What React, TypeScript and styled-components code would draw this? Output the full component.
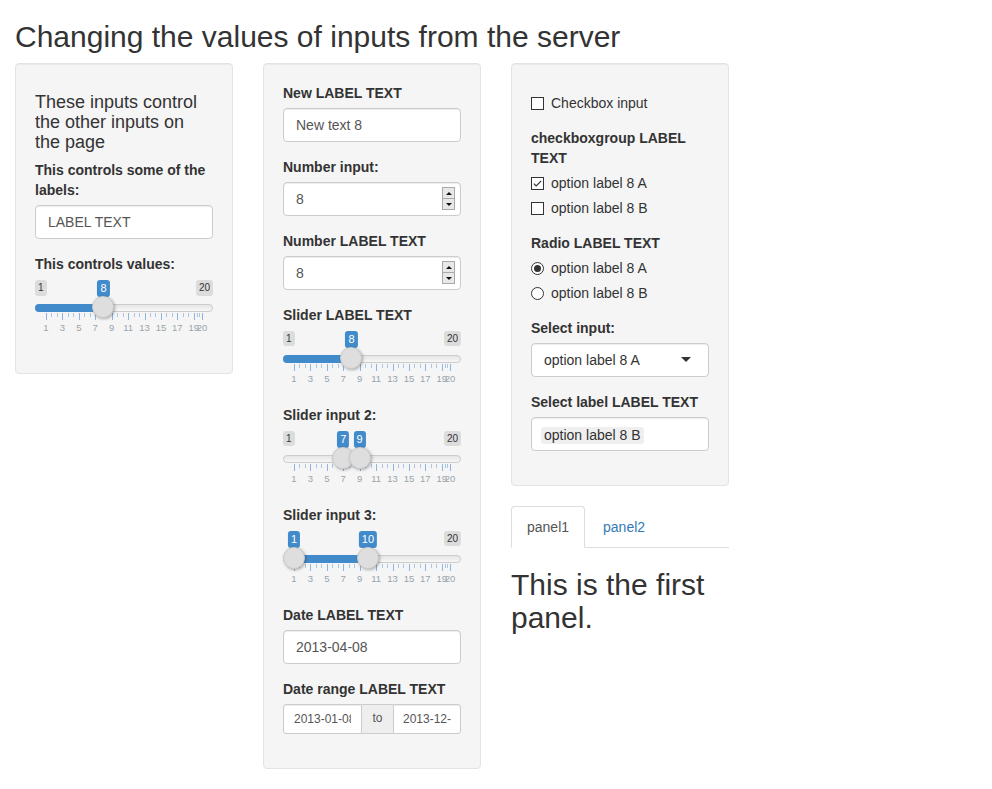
import React from "react";
import styled, { createGlobalStyle } from "styled-components";

const GlobalStyle = createGlobalStyle`
	* {
		box-sizing: border-box;
	}
	html,
	body {
		margin: 0;
		background: #fff;
	}
	body {
		font-family: "Liberation Sans", Arial, sans-serif;
		font-size: 14px;
		line-height: 1.42857143;
		color: #333;
	}
`;

const Page = styled.div`
	padding: 0 15px;
`;

const Title = styled.h2`
	margin: 20px 0 10px;
	font-size: 30px;
	font-weight: 500;
	line-height: 1.1;
`;

const Row = styled.div`
	display: flex;
	align-items: flex-start;
	margin: 0 -15px;
`;

const Column = styled.div`
	flex: 0 0 25%;
	min-width: 0;
	padding: 0 15px;
`;

const Well = styled.div`
	min-height: 20px;
	padding: 19px;
	margin-bottom: 20px;
	background: #f5f5f5;
	border: 1px solid #e3e3e3;
	border-radius: 4px;
	box-shadow: inset 0 1px 1px rgba(0, 0, 0, 0.05);
`;

const Heading = styled.h4`
	margin: 10px 0 8px;
	font-size: 18px;
	font-weight: 500;
	line-height: 1.1;
`;

const FormGroup = styled.div`
	margin-bottom: 15px;
`;

const Label = styled.label`
	display: block;
	margin-bottom: 5px;
	font-weight: 700;
`;

const TextInput = styled.input`
	display: block;
	width: 100%;
	height: 34px;
	padding: 6px 12px;
	font-family: inherit;
	font-size: 14px;
	line-height: 1.42857143;
	color: #555;
	background: #fff;
	border: 1px solid #ccc;
	border-radius: 4px;
	box-shadow: inset 0 1px 1px rgba(0, 0, 0, 0.075);
	outline: none;
`;

/* number input with the native looking spin buttons */
const NumberWrap = styled.div`
	position: relative;
`;

const SpinBox = styled.span`
	position: absolute;
	top: 5px;
	right: 6px;
	width: 13px;
	height: 23px;
	display: flex;
	flex-direction: column;
	border: 1px solid #a9a9a9;
	background: #e8e8e8;
`;

const SpinButton = styled.span<{ $down?: boolean }>`
	flex: 1;
	display: flex;
	align-items: center;
	justify-content: center;
	border-top: ${(p) => (p.$down ? "1px solid #a9a9a9" : "0")};

	&::after {
		content: "";
		width: 0;
		height: 0;
		border-left: 3px solid transparent;
		border-right: 3px solid transparent;
		${(p) => (p.$down ? "border-top: 3px solid #111;" : "border-bottom: 3px solid #111;")}
	}
`;

/* slider (ion.rangeSlider, shiny skin) */
const SliderBox = styled.div`
	position: relative;
	height: 60px;
	font-family: Arial, "Liberation Sans", sans-serif;
`;

const MinMax = styled.span<{ $side: "left" | "right" }>`
	position: absolute;
	top: 1px;
	${(p) => p.$side}: 0;
	padding: 1px 3px;
	font-size: 10px;
	line-height: 1.333;
	color: #333;
	background: rgba(0, 0, 0, 0.1);
	border-radius: 3px;
`;

const ValueTag = styled.span`
	position: absolute;
	top: 1px;
	transform: translateX(-50%);
	padding: 1px 3px;
	font-size: 11px;
	line-height: 1.333;
	color: #fff;
	background: #428bca;
	border-radius: 3px;
	white-space: nowrap;
`;

const Track = styled.div`
	position: absolute;
	top: 25px;
	left: 0;
	right: 0;
	height: 8px;
	border: 1px solid #ccc;
	border-radius: 16px;
	background: linear-gradient(to bottom, #ddd -50%, #fff 150%);
`;

const Bar = styled.div<{ $edge?: boolean }>`
	position: absolute;
	top: 25px;
	height: 8px;
	background: #428bca;
	border-radius: ${(p) => (p.$edge ? "16px 0 0 16px" : "0")};
`;

const Handle = styled.div`
	position: absolute;
	top: 17px;
	width: 22px;
	height: 22px;
	margin-left: -11px;
	background: #dedede;
	border: 1px solid #ccc;
	border-radius: 27px;
	box-shadow: 1px 1px 3px rgba(0, 0, 0, 0.3);
`;

const Tick = styled.span<{ $big?: boolean }>`
	position: absolute;
	top: 34px;
	width: 1px;
	height: ${(p) => (p.$big ? "7px" : "4px")};
	background: ${(p) => (p.$big ? "#8db5dd" : "#a9c6e4")};
`;

const TickText = styled.span`
	position: absolute;
	top: 43px;
	transform: translateX(-50%);
	font-size: 9.5px;
	line-height: 11px;
	color: #99a4ac;
	white-space: nowrap;
`;

type SliderProps = {
	min: number;
	max: number;
	from: number;
	to?: number;
};

const at = (f: number) => `calc(11px + (100% - 22px) * ${f})`;

const Slider: React.FC<SliderProps> = ({ min, max, from, to }) => {
	const frac = (v: number) => (v - min) / (max - min);
	const bigValues: number[] = [];
	for (let v = min; v < max; v += 2) bigValues.push(v);
	bigValues.push(max);
	const smallValues: number[] = [];
	for (let i = 0; i < bigValues.length - 1; i++) {
		const a = bigValues[i];
		const b = bigValues[i + 1];
		smallValues.push(a + (b - a) / 3, a + ((b - a) * 2) / 3);
	}
	const isRange = to !== undefined;
	const hideMin = frac(from) < 0.08;
	const hideMax = frac(to ?? from) > 0.92;

	return (
		<SliderBox>
			<Track />
			{isRange ? (
				<Bar style={{ left: at(frac(from)), width: `calc((100% - 22px) * ${frac(to!) - frac(from)})` }} />
			) : (
				<Bar $edge style={{ left: 0, width: at(frac(from)) }} />
			)}
			{!hideMin && <MinMax $side="left">{min}</MinMax>}
			{!hideMax && <MinMax $side="right">{max}</MinMax>}
			<ValueTag style={{ left: at(frac(from)) }}>{from}</ValueTag>
			{isRange && <ValueTag style={{ left: at(frac(to!)) }}>{to}</ValueTag>}
			{smallValues.map((v) => (
				<Tick key={"s" + v} style={{ left: at(frac(v)) }} />
			))}
			{bigValues.map((v) => (
				<Tick key={"b" + v} $big style={{ left: at(frac(v)) }} />
			))}
			{bigValues.map((v) => (
				<TickText key={"t" + v} style={{ left: at(frac(v)) }}>
					{v}
				</TickText>
			))}
			<Handle style={{ left: at(frac(from)) }} />
			{isRange && <Handle style={{ left: at(frac(to!)) }} />}
		</SliderBox>
	);
};

/* date range */
const DateRange = styled.div`
	display: flex;
	height: 30px;
`;

const DateInput = styled.input<{ $first?: boolean }>`
	flex: ${(p) => (p.$first ? "0 0 79px" : "1 1 0")};
	min-width: 0;
	height: 30px;
	padding: ${(p) => (p.$first ? "5px 10px" : "5px 9px")};
	font-family: inherit;
	font-size: 12px;
	line-height: 1.5;
	color: #555;
	background: #fff;
	border: 1px solid #ccc;
	border-radius: ${(p) => (p.$first ? "3px 0 0 3px" : "0 3px 3px 0")};
	box-shadow: inset 0 1px 1px rgba(0, 0, 0, 0.075);
	outline: none;
`;

const Addon = styled.span`
	flex: 0 0 31px;
	display: flex;
	align-items: center;
	justify-content: center;
	font-size: 12px;
	color: #555;
	background: #eee;
	border-top: 1px solid #ccc;
	border-bottom: 1px solid #ccc;
`;

/* checkboxes and radios */
const CheckRow = styled.div<{ $top?: boolean }>`
	display: flex;
	align-items: flex-start;
	min-height: 20px;
	margin-top: ${(p) => (p.$top ? "10px" : "0")};
`;

const OptionList = styled.div`
	display: flex;
	flex-direction: column;
	gap: 5px;
`;

const Box = styled.span<{ $round?: boolean }>`
	flex: 0 0 13px;
	width: 13px;
	height: 13px;
	margin: 4px 7px 0 0;
	display: flex;
	align-items: center;
	justify-content: center;
	background: #fff;
	border: 1px solid #333;
	border-radius: ${(p) => (p.$round ? "50%" : "0")};
`;

const Dot = styled.span`
	width: 7px;
	height: 7px;
	border-radius: 50%;
	background: #333;
`;

const Check: React.FC<{ checked?: boolean; label: string; top?: boolean }> = ({ checked, label, top }) => (
	<CheckRow $top={top}>
		<Box>
			{checked && (
				<svg width="11" height="11" viewBox="0 0 11 11">
					<polyline points="1.8,5.6 4.2,8 9.2,2.8" fill="none" stroke="#333" strokeWidth="1.2" />
				</svg>
			)}
		</Box>
		<span>{label}</span>
	</CheckRow>
);

const Radio: React.FC<{ checked?: boolean; label: string }> = ({ checked, label }) => (
	<CheckRow>
		<Box $round>{checked && <Dot />}</Box>
		<span>{label}</span>
	</CheckRow>
);

/* selectize */
const SelectBox = styled.div<{ $multi?: boolean }>`
	position: relative;
	display: flex;
	align-items: flex-start;
	height: 34px;
	padding: ${(p) => (p.$multi ? "9px 9px 0" : "6px 12px")};
	color: #333;
	background: #fff;
	border: 1px solid #ccc;
	border-radius: 4px;
	box-shadow: inset 0 1px 1px rgba(0, 0, 0, 0.075);

	${(p) =>
		!p.$multi &&
		`
		&::after {
			content: "";
			position: absolute;
			top: 50%;
			right: 17px;
			margin-top: -3px;
			border-style: solid;
			border-width: 5px 5px 0 5px;
			border-color: #333 transparent transparent transparent;
		}
	`}
`;

const SelectItem = styled.span`
	padding: 1px 3px;
	line-height: 15px;
	background: #efefef;
	border-radius: 3px;
`;

/* tabs */
const Tabs = styled.ul`
	display: flex;
	margin: 0;
	padding: 0;
	list-style: none;
	border-bottom: 1px solid #ddd;
`;

const Tab = styled.li<{ $active?: boolean }>`
	margin-bottom: -1px;
	margin-right: 2px;
	padding: 10px 15px;
	line-height: 1.42857143;
	color: ${(p) => (p.$active ? "#555" : "#337ab7")};
	background: ${(p) => (p.$active ? "#fff" : "transparent")};
	border: 1px solid ${(p) => (p.$active ? "#ddd" : "transparent")};
	border-bottom-color: transparent;
	border-radius: 4px 4px 0 0;
`;

const PanelText = styled.h2`
	margin: 20px 0 10px;
	font-size: 30px;
	font-weight: 500;
	line-height: 1.1;
`;

const NumberInput: React.FC<{ value: string }> = ({ value }) => (
	<NumberWrap>
		<TextInput readOnly value={value} />
		<SpinBox>
			<SpinButton />
			<SpinButton $down />
		</SpinBox>
	</NumberWrap>
);

const App: React.FC = () => {
	return (
		<Page>
			<GlobalStyle />
			<Title>Changing the values of inputs from the server</Title>
			<Row>
				<Column>
					<Well>
						<Heading>These inputs control the other inputs on the page</Heading>
						<FormGroup>
							<Label>This controls some of the labels:</Label>
							<TextInput readOnly value="LABEL TEXT" />
						</FormGroup>
						<FormGroup>
							<Label>This controls values:</Label>
							<Slider min={1} max={20} from={8} />
						</FormGroup>
					</Well>
				</Column>

				<Column>
					<Well>
						<FormGroup>
							<Label>New LABEL TEXT</Label>
							<TextInput readOnly value="New text 8" />
						</FormGroup>
						<FormGroup>
							<Label>Number input:</Label>
							<NumberInput value="8" />
						</FormGroup>
						<FormGroup>
							<Label>Number LABEL TEXT</Label>
							<NumberInput value="8" />
						</FormGroup>
						<FormGroup>
							<Label>Slider LABEL TEXT</Label>
							<Slider min={1} max={20} from={8} />
						</FormGroup>
						<FormGroup>
							<Label>Slider input 2:</Label>
							<Slider min={1} max={20} from={7} to={9} />
						</FormGroup>
						<FormGroup>
							<Label>Slider input 3:</Label>
							<Slider min={1} max={20} from={1} to={10} />
						</FormGroup>
						<FormGroup>
							<Label>Date LABEL TEXT</Label>
							<TextInput readOnly value="2013-04-08" />
						</FormGroup>
						<FormGroup>
							<Label>Date range LABEL TEXT</Label>
							<DateRange>
								<DateInput $first readOnly value="2013-01-08" />
								<Addon>to</Addon>
								<DateInput readOnly value="2013-12-31" />
							</DateRange>
						</FormGroup>
					</Well>
				</Column>

				<Column>
					<Well>
						<FormGroup>
							<Check top label="Checkbox input" />
						</FormGroup>
						<FormGroup>
							<Label>checkboxgroup LABEL TEXT</Label>
							<OptionList>
								<Check checked label="option label 8 A" />
								<Check label="option label 8 B" />
							</OptionList>
						</FormGroup>
						<FormGroup>
							<Label>Radio LABEL TEXT</Label>
							<OptionList>
								<Radio checked label="option label 8 A" />
								<Radio label="option label 8 B" />
							</OptionList>
						</FormGroup>
						<FormGroup>
							<Label>Select input:</Label>
							<SelectBox>option label 8 A</SelectBox>
						</FormGroup>
						<FormGroup>
							<Label>Select label LABEL TEXT</Label>
							<SelectBox $multi>
								<SelectItem>option label 8 B</SelectItem>
							</SelectBox>
						</FormGroup>
					</Well>
					<Tabs>
						<Tab $active>panel1</Tab>
						<Tab>panel2</Tab>
					</Tabs>
					<PanelText>This is the first panel.</PanelText>
				</Column>
			</Row>
		</Page>
	);
};

export default App;
